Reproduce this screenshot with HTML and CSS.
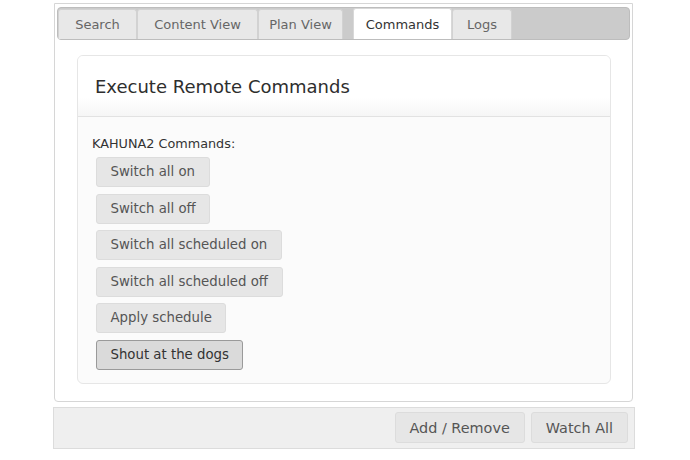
FILE: index.html
```html
<!DOCTYPE html>
<html>
<head>
<meta charset="utf-8">
<link rel="stylesheet" href="styles.css">
</head>
<body>
<div class="wrap">
  <div class="panel">
    <div class="tabbar">
      <div class="tab tab-search">Search</div>
      <div class="tab tab-content">Content View</div>
      <div class="tab tab-plan">Plan View</div>
      <div class="tab tab-commands active">Commands</div>
      <div class="tab tab-logs">Logs</div>
    </div>
    <div class="card">
      <div class="card-header">Execute Remote Commands</div>
      <div class="card-body">
        <div class="label">KAHUNA2 Commands:</div>
        <div class="btns">
          <button class="btn">Switch all on</button>
          <button class="btn">Switch all off</button>
          <button class="btn">Switch all scheduled on</button>
          <button class="btn">Switch all scheduled off</button>
          <button class="btn">Apply schedule</button>
          <button class="btn btn-focus">Shout at the dogs</button>
        </div>
      </div>
    </div>
  </div>
  <div class="footer">
    <button class="fbtn">Add / Remove</button>
    <button class="fbtn">Watch All</button>
  </div>
</div>
</body>
</html>
```

FILE: styles.css
```css
html, body {
  margin: 0;
  padding: 0;
  background: #ffffff;
}
body {
  font-family: "DejaVu Sans", Verdana, sans-serif;
  color: #333;
}
.wrap {
  margin-left: 53px;
  width: 582px;
  padding-top: 3px;
}
.panel {
  border: 1px solid #d6d6d6;
  border-radius: 0 0 4px 4px;
  margin-left: 1px;
  width: 579px;
  box-sizing: border-box;
  padding: 3px 2px 17px 2px;
  background: #fff;
}
.tabbar {
  display: flex;
  align-items: flex-end;
  height: 33px;
  box-sizing: border-box;
  background: #cbcbcb;
  border: 1px solid #bdbdbd;
  border-radius: 4px;
  padding: 2px 0 0 0;
}
.tab {
  height: 30px;
  box-sizing: border-box;
  display: flex;
  align-items: center;
  justify-content: center;
  font-size: 13px;
  color: #666;
  background: #e8e8e8;
  border: 1px solid #d2d2d2;
  border-bottom: none;
  border-radius: 3px 3px 0 0;
}
.tab-search { width: 79px; }
.tab-content { width: 121px; }
.tab-plan { width: 85px; }
.tab-commands { width: 99px; margin-left: 10px; }
.tab-logs { width: 60px; }
.tab.active {
  background: #ffffff;
  color: #333;
  height: 31px;
  border-color: #d8d8d8;
}
.card {
  margin: 15px 19px 0 20px;
  border: 1px solid #e6e6e6;
  border-radius: 6px;
  background: #fbfbfb;
  overflow: hidden;
}
.card-header {
  height: 61px;
  box-sizing: border-box;
  padding-left: 17px;
  display: flex;
  align-items: center;
  font-size: 18px;
  color: #2e2e2e;
  background: linear-gradient(#ffffff, #ffffff 70%, #f6f6f6);
  border-bottom: 1px solid #e2e2e2;
}
.card-body {
  padding: 19px 16px 13px 14px;
}
.label {
  font-size: 12.8px;
  color: #333;
  line-height: 15px;
}
.btns {
  display: flex;
  flex-direction: column;
  align-items: flex-start;
  gap: 6.5px;
  margin-top: 6px;
  padding-left: 4px;
}
.btn {
  font-family: "DejaVu Sans", Verdana, sans-serif;
  font-size: 13.3px;
  line-height: 16px;
  height: 30px;
  padding: 0 13.5px;
  color: #555;
  background: #e6e6e6;
  border: 1px solid #dcdcdc;
  border-radius: 3px;
}
.btn-focus {
  background: #dadada;
  border-color: #9a9a9a;
  color: #333;
}
.footer {
  margin-top: 5px;
  height: 42px;
  box-sizing: border-box;
  background: #efefef;
  border: 1px solid #dcdcdc;
  display: flex;
  justify-content: flex-end;
  align-items: center;
  gap: 6px;
  padding-right: 6px;
}
.fbtn {
  font-family: "DejaVu Sans", Verdana, sans-serif;
  font-size: 14.4px;
  height: 31px;
  padding: 0 14px;
  color: #555;
  background: #e6e6e6;
  border: 1px solid #dcdcdc;
  border-radius: 3px;
}
```
